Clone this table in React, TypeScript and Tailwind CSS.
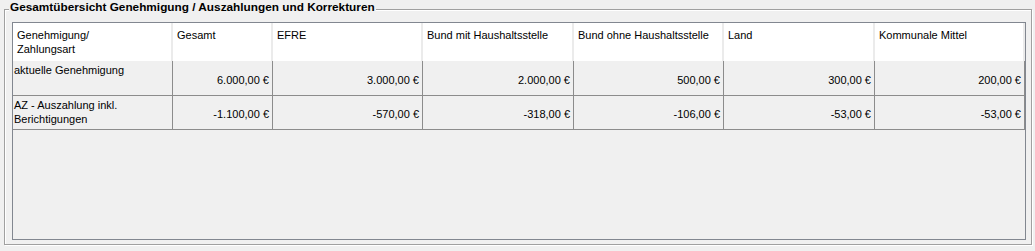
import React from "react";

const cols = [160, 100, 150, 151, 150, 151, 150];
const headers = [
  ["Genehmigung/", "Zahlungsart"],
  ["Gesamt"],
  ["EFRE"],
  ["Bund mit Haushaltsstelle"],
  ["Bund ohne Haushaltsstelle"],
  ["Land"],
  ["Kommunale Mittel"],
];

const rows: { label: string[]; values: string[]; h: string; pt: string }[] = [
  {
    label: ["aktuelle Genehmigung"],
    values: ["6.000,00 €", "3.000,00 €", "2.000,00 €", "500,00 €", "300,00 €", "200,00 €"],
    h: "h-[35px]",
    pt: "pt-[12px]",
  },
  {
    label: ["AZ - Auszahlung inkl.", "Berichtigungen"],
    values: ["-1.100,00 €", "-570,00 €", "-318,00 €", "-106,00 €", "-53,00 €", "-53,00 €"],
    h: "h-[34px]",
    pt: "pt-[11px]",
  },
];

export default function App() {
  return (
    <div
      className="w-[1035px] h-[251px] bg-[#f0f0f0] pt-[9px] pl-[4px] text-black"
      style={{ fontFamily: '"Liberation Sans", Arial, sans-serif' }}
    >
      <div className="relative w-[1028px] h-[236px] border border-[#a0a0a0] shadow-[inset_1px_1px_0_#ffffff,1px_1px_0_#ffffff] pl-[7px] pt-[12px]">
        <div className="absolute left-[4px] top-[-10px] px-[1px] bg-[#f0f0f0] text-[11.8px] leading-[14px] font-bold whitespace-nowrap">
          Gesamtübersicht Genehmigung / Auszahlungen und Korrekturen
        </div>
        <div className="w-[1014px] h-[218px] border border-[#828790] bg-[#f0f0f0] text-[11px] leading-[14px]">
          <div className="flex h-[38px] bg-white">
            {headers.map((h, i) => (
              <div
                key={i}
                className="shrink-0 border-r-2 border-[#ebebeb] pl-[4px] pt-[5px]"
                style={{ width: cols[i] }}
              >
                {h.map((l, j) => (
                  <div key={j} className="whitespace-nowrap">
                    {l}
                  </div>
                ))}
              </div>
            ))}
          </div>
          {rows.map((r, ri) => (
            <div key={ri} className={`flex ${r.h} border-b border-[#8c8c8c]`}>
              <div
                className="shrink-0 border-r border-[#8c8c8c] pl-[1px] pt-[2px]"
                style={{ width: cols[0] }}
              >
                {r.label.map((l, j) => (
                  <div key={j} className="whitespace-nowrap">
                    {l}
                  </div>
                ))}
              </div>
              {r.values.map((v, vi) => (
                <div
                  key={vi}
                  className={`shrink-0 border-r border-[#8c8c8c] pr-[3px] text-right whitespace-nowrap ${r.pt}`}
                  style={{ width: cols[vi + 1] }}
                >
                  {v}
                </div>
              ))}
            </div>
          ))}
        </div>
      </div>
    </div>
  );
}
